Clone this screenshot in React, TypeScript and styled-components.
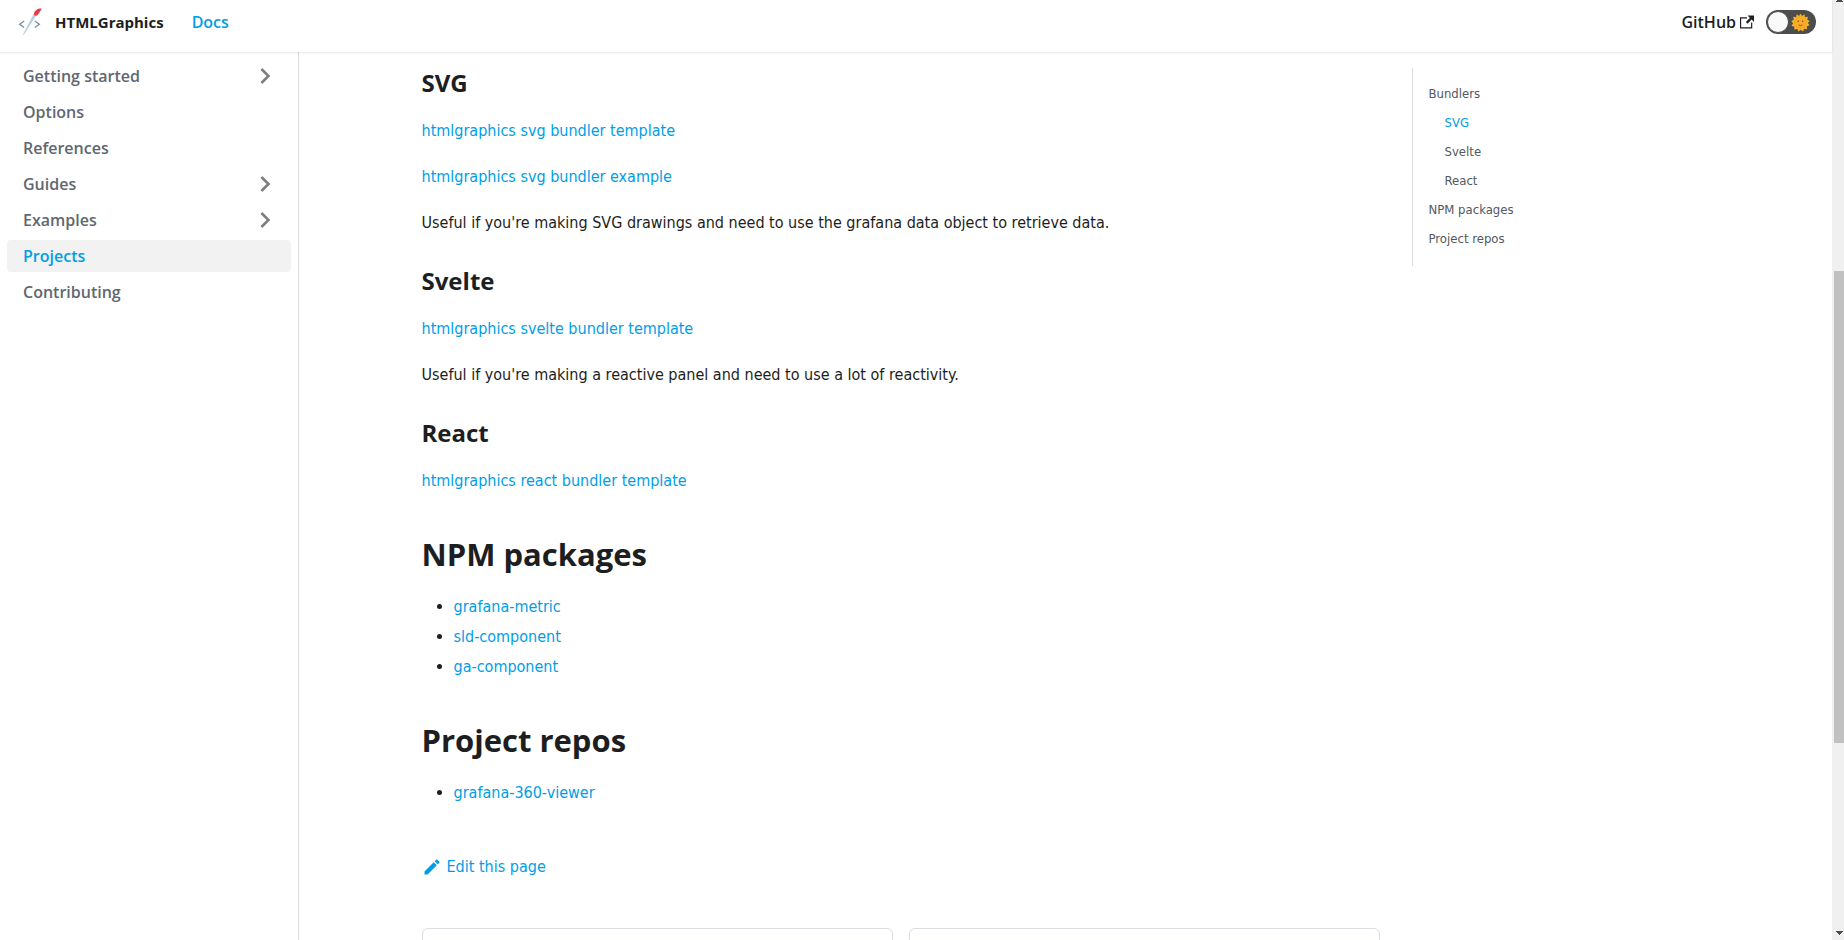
import React from 'react';
import styled, { createGlobalStyle } from 'styled-components';

const LINK = '#009ee6';
const TEXT = '#1c1e21';
const MUTED = '#606770';
const LINE = '#dadde1';
const STRONG_FONT = '"Open Sans", "Noto Sans", sans-serif';

const GlobalStyle = createGlobalStyle`
  *, *::before, *::after { box-sizing: border-box; }
  body {
    margin: 0;
    background: #fff;
    color: ${TEXT};
    font: 400 16px/26px "DejaVu Sans Condensed", "Open Sans", sans-serif;
  }
  ul { list-style: none; margin: 0; padding: 0; }
  a { color: ${LINK}; text-decoration: none; }
  a:hover { text-decoration: underline; }
`;

const Shell = styled.div`
  display: flex;
  height: 100vh;
  overflow: hidden;
`;

const Page = styled.div`
  flex: 1;
  min-width: 0;
  display: flex;
  flex-direction: column;
`;

const Navbar = styled.nav`
  position: relative;
  display: flex;
  flex: none;
  align-items: center;
  justify-content: space-between;
  height: 52px;
  padding: 0 16px 8px;
  background: #fff;
  box-shadow: 0 1px 2px rgba(0, 0, 0, 0.1);
  font-family: ${STRONG_FONT};
  font-weight: 600;
`;

const NavGroup = styled.div`
  display: flex;
  align-items: center;
`;

const Brand = styled.a`
  display: flex;
  align-items: center;
  gap: 7px;
  margin-right: 28px;
  color: ${TEXT};
  font-size: 15px;
  font-weight: 700;
`;

const NavLink = styled.a<{ $active?: boolean }>`
  display: flex;
  align-items: center;
  gap: 4px;
  color: ${(p) => (p.$active ? LINK : TEXT)};
`;

const ToggleTrack = styled.label`
  display: flex;
  align-items: center;
  justify-content: space-between;
  width: 50px;
  height: 24px;
  margin-left: 12px;
  padding: 0 6px 0 1px;
  border-radius: 12px;
  background: #4d4d4d;
  cursor: pointer;
`;

const ToggleKnob = styled.input`
  appearance: none;
  width: 22px;
  height: 22px;
  margin: 0;
  border: 1px solid #4d4d4d;
  border-radius: 50%;
  background: #fafafa;
  cursor: pointer;
`;

const Body = styled.div`
  display: flex;
  flex: 1;
  min-height: 0;
`;

const Sidebar = styled.aside`
  flex: none;
  width: 299px;
  padding: 8px 7px;
  border-right: 1px solid ${LINE};
`;

const Menu = styled.ul`
  display: flex;
  flex-direction: column;
  gap: 4px;
`;

const MenuRow = styled.li<{ $active: boolean }>`
  display: flex;
  align-items: center;
  height: 32px;
  border-radius: 4px;
  background: ${(p) => (p.$active ? '#f2f2f2' : 'transparent')};
`;

const MenuLink = styled.a<{ $active: boolean }>`
  flex: 1;
  padding: 6px 16px;
  color: ${(p) => (p.$active ? LINK : MUTED)};
  font-family: ${STRONG_FONT};
  font-weight: 600;
  line-height: 20px;
`;

const Caret = styled.button`
  display: flex;
  margin: 0 10px 0 0;
  padding: 0;
  border: 0;
  background: none;
  color: #7f7f7f;
  cursor: pointer;
`;

const Main = styled.main`
  flex: 1;
  min-width: 0;
  overflow: hidden;
`;

const Container = styled.div`
  display: grid;
  grid-template-columns: minmax(0, 1fr) 298px;
  gap: 32px;
  align-items: start;
  max-width: 1320px;
  margin: 0 auto;
  padding: 16px;
`;

const SubHeading = styled.h3`
  margin: 30px 0 20px;
  font-family: ${STRONG_FONT};
  font-size: 24px;
  font-weight: 700;
  line-height: 30px;
  &:first-child { margin-top: 0; }
`;

const Heading = styled.h2`
  margin: 40px 0 20px;
  font-family: ${STRONG_FONT};
  font-size: 31px;
  font-weight: 700;
  line-height: 40px;
`;

const Paragraph = styled.p`
  margin: 0 0 20px;
`;

const LinkList = styled.ul`
  display: flex;
  flex-direction: column;
  gap: 4px;
  padding-left: 32px;
  list-style: disc;
`;

const EditLink = styled.a`
  display: inline-flex;
  align-items: center;
  gap: 5px;
  margin: 48px 0;
`;

const Pagination = styled.nav`
  display: grid;
  grid-template-columns: 1fr 1fr;
  gap: 16px;
`;

const PageCard = styled.a`
  height: 80px;
  border: 1px solid ${LINE};
  border-radius: 6px;
`;

const Toc = styled.ul`
  display: flex;
  flex-direction: column;
  gap: 9px;
  padding: 16px 0 17px 16px;
  border-left: 1px solid ${LINE};
`;

const TocItem = styled.li<{ $nested?: boolean }>`
  padding-left: ${(p) => (p.$nested ? 16 : 0)}px;
  font-size: 13px;
  line-height: 20px;
`;

const TocLink = styled.a<{ $active?: boolean }>`
  color: ${(p) => (p.$active ? LINK : '#525860')};
`;

const Scrollbar = styled.div`
  display: flex;
  flex: none;
  flex-direction: column;
  width: 12px;
  padding-left: 2px;
  background: #f0f0f0;
`;

const Spacer = styled.div<{ $grow: number }>`
  display: flex;
  flex: ${(p) => p.$grow} 0 0;
  padding-left: 2px;
`;

const Thumb = styled.div`
  flex: 472 0 0;
  background: #c1c1c1;
`;

const ScrollArrow = styled.svg<{ $end?: boolean }>`
  display: block;
  align-self: ${(p) => (p.$end ? 'flex-end' : 'flex-start')};
  margin-bottom: ${(p) => (p.$end ? 5 : 0)}px;
`;

const Logo = () => (
  <svg width="32" height="32" viewBox="0 0 32 32" fill="none" aria-hidden="true">
    <path d="M8.2 15 3.6 18.2l4.600 3.400" stroke="#76899c" strokeWidth="1.2" />
    <path d="M18.800 15l4.600 3.200-4.600 3.400" stroke="#76899c" strokeWidth="1.2" />
    <path d="M6.600 29.100 17.400 8.400l2.600 1.500L8 28.400z" fill="#b9cfe3" />
    <path d="M17.600 9c.3-2.500 1.800-4.900 4.200-6 1.500-.6 3-.6 4-.3-.3.9-1 1.400-1.500 2.200-1 2-2.100 3.900-4.300 5z" fill="#f2403f" />
    <path d="M18.800 6.200l1 .7M21 7.400l.8.500M21.900 4.200l.8.500" stroke="#4b3fd0" strokeWidth="1" />
  </svg>
);

const ExternalIcon = () => (
  <svg width="14" height="14" viewBox="0 0 24 24" fill="currentColor" aria-hidden="true">
    <path d="M21 13v10h-21v-19h12v2h-10v15h17v-8h2zm3-12h-10.988l4.035 4-6.977 7.07 2.828 2.828 6.977-7.07 4.125 4.172v-11z" />
  </svg>
);

const SunIcon = () => (
  <svg width="19" height="19" viewBox="0 0 20 20" aria-hidden="true">
    <path
      d="M10 .4l1.6 2.7 2.6-1.8.5 3.1 3.1-.4-.7 3.1 2.6 1.4-2 2 1.900 2.500-3 .9.2 3.100-3.100-.5-1 3-2.500-1.900-2.400 2-1.300-2.900-3 .9.1-3.200-3.100-.9 1.800-2.600L.3 8.600l2.700-1.500L2.300 4l3.100.4.600-3.100 2.600 1.800z"
      fill="#f7b62b"
    />
    <circle cx="10" cy="10" r="6.300" fill="#fbac28" stroke="#ef9a22" strokeWidth=".6" />
    <circle cx="7.700" cy="8.600" r=".8" fill="#7a4a12" />
    <circle cx="12.300" cy="8.600" r=".8" fill="#7a4a12" />
    <path d="M8 12.600q2 1.500 4 0" fill="none" stroke="#a8421c" strokeWidth="1" />
  </svg>
);

const Chevron = () => (
  <svg width="32" height="32" viewBox="0 0 24 24" fill="currentColor" aria-hidden="true">
    <path d="M8.59 7.41 13.17 12l-4.58 4.59L10 18l6-6-6-6z" />
  </svg>
);

const PencilIcon = () => (
  <svg width="20" height="20" viewBox="0 0 40 40" fill="currentColor" aria-hidden="true">
    <path d="m34.5 11.7l-3 3.1-6.3-6.3 3.1-3q0.5-0.5 1.2-0.5t1.1 0.5l3.9 3.9q0.5 0.4 0.5 1.1t-0.5 1.2z m-29.5 17.1l18.4-18.5 6.3 6.3-18.4 18.4h-6.3v-6.2z" />
  </svg>
);

const menu = [
  { label: 'Getting started', expandable: true },
  { label: 'Options' },
  { label: 'References' },
  { label: 'Guides', expandable: true },
  { label: 'Examples', expandable: true },
  { label: 'Projects', active: true },
  { label: 'Contributing' },
];

const toc = [
  { label: 'Bundlers', href: '#bundlers' },
  { label: 'SVG', href: '#svg', nested: true, active: true },
  { label: 'Svelte', href: '#svelte', nested: true },
  { label: 'React', href: '#react', nested: true },
  { label: 'NPM packages', href: '#npm-packages' },
  { label: 'Project repos', href: '#project-repos' },
];

const packages = ['grafana-metric', 'sld-component', 'ga-component'];

export default function App() {
  return (
    <>
      <GlobalStyle />
      <Shell>
        <Page>
          <Navbar aria-label="Main">
            <NavGroup>
              <Brand href="#">
                <Logo />
                HTMLGraphics
              </Brand>
              <NavLink href="#docs" $active>
                Docs
              </NavLink>
            </NavGroup>
            <NavGroup>
              <NavLink href="#github">
                GitHub
                <ExternalIcon />
              </NavLink>
              <ToggleTrack>
                <ToggleKnob type="checkbox" role="switch" aria-label="Dark mode" />
                <SunIcon />
              </ToggleTrack>
            </NavGroup>
          </Navbar>
          <Body>
            <Sidebar>
              <Menu>
                {menu.map(({ label, expandable, active }) => (
                  <MenuRow key={label} $active={!!active}>
                    <MenuLink href="#" $active={!!active}>
                      {label}
                    </MenuLink>
                    {expandable && (
                      <Caret type="button" aria-label={`Expand ${label}`}>
                        <Chevron />
                      </Caret>
                    )}
                  </MenuRow>
                ))}
              </Menu>
            </Sidebar>
            <Main>
              <Container>
                <article>
                  <SubHeading id="svg">SVG</SubHeading>
                  <Paragraph>
                    <a href="#svg-template">htmlgraphics svg bundler template</a>
                  </Paragraph>
                  <Paragraph>
                    <a href="#svg-example">htmlgraphics svg bundler example</a>
                  </Paragraph>
                  <Paragraph>
                    Useful if you're making SVG drawings and need to use the grafana data object to
                    retrieve data.
                  </Paragraph>
                  <SubHeading id="svelte">Svelte</SubHeading>
                  <Paragraph>
                    <a href="#svelte-template">htmlgraphics svelte bundler template</a>
                  </Paragraph>
                  <Paragraph>
                    Useful if you're making a reactive panel and need to use a lot of reactivity.
                  </Paragraph>
                  <SubHeading id="react">React</SubHeading>
                  <Paragraph>
                    <a href="#react-template">htmlgraphics react bundler template</a>
                  </Paragraph>
                  <Heading id="npm-packages">NPM packages</Heading>
                  <LinkList>
                    {packages.map((name) => (
                      <li key={name}>
                        <a href={`#${name}`}>{name}</a>
                      </li>
                    ))}
                  </LinkList>
                  <Heading id="project-repos">Project repos</Heading>
                  <LinkList>
                    <li>
                      <a href="#grafana-360-viewer">grafana-360-viewer</a>
                    </li>
                  </LinkList>
                  <EditLink href="#edit">
                    <PencilIcon />
                    Edit this page
                  </EditLink>
                  <Pagination aria-label="Docs pages">
                    <PageCard href="#previous" aria-label="Previous page" />
                    <PageCard href="#next" aria-label="Next page" />
                  </Pagination>
                </article>
                <Toc>
                  {toc.map(({ label, href, nested, active }) => (
                    <TocItem key={label} $nested={nested}>
                      <TocLink href={href} $active={active}>
                        {label}
                      </TocLink>
                    </TocItem>
                  ))}
                </Toc>
              </Container>
            </Main>
          </Body>
        </Page>
        <Scrollbar aria-hidden="true">
          <Spacer $grow={271}>
            <ScrollArrow width="7" height="2" viewBox="0 0 7 2">
              <path d="M1 0h5v1h1v1H0V1h1z" fill="#4d4d4d" />
            </ScrollArrow>
          </Spacer>
          <Thumb />
          <Spacer $grow={197}>
            <ScrollArrow $end width="7" height="4" viewBox="0 0 7 4">
              <path d="M0 0h7v1H6v1H5v1H4v1H3V3H2V2H1V1H0z" fill="#4d4d4d" />
            </ScrollArrow>
          </Spacer>
        </Scrollbar>
      </Shell>
    </>
  );
}
